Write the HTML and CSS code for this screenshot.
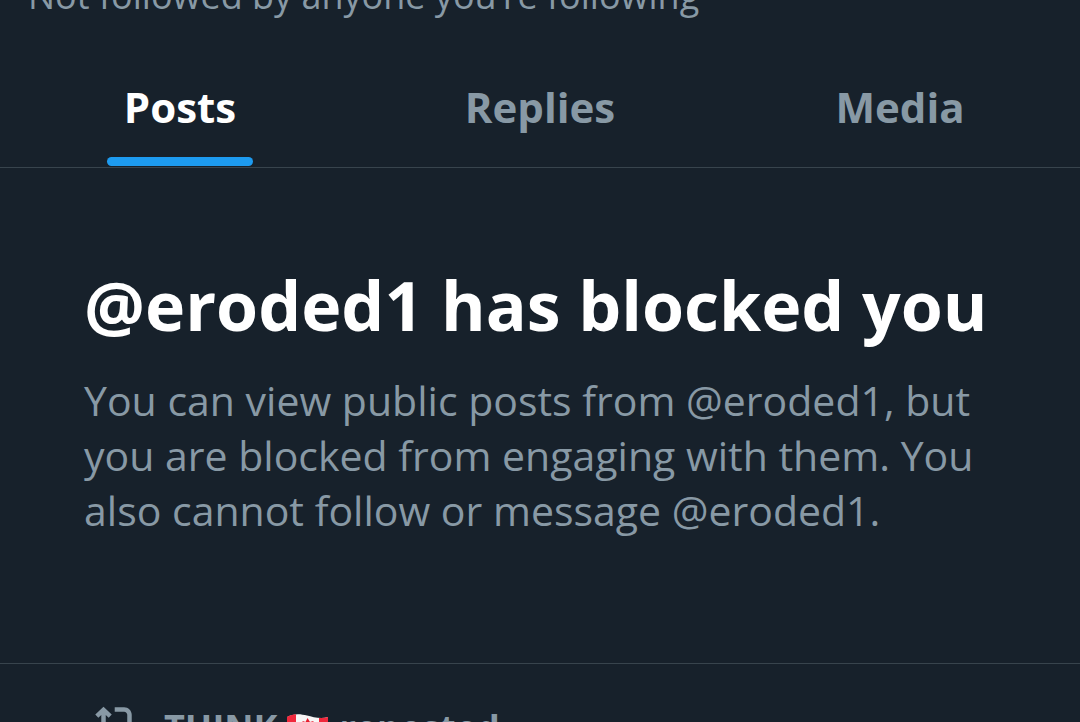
FILE: index.html
```html
<!DOCTYPE html>
<html lang="en">
<head>
<meta charset="utf-8">
<meta name="viewport" content="width=device-width, initial-scale=1">
<title>@eroded1</title>
<link rel="stylesheet" href="styles.css">
</head>
<body class="page">
  <p class="followers-note">Not followed by anyone you’re following</p>
  <nav class="tabs">
    <a class="tab tab-active" href="#posts" aria-current="page"><span class="tab-label">Posts</span></a>
    <a class="tab" href="#replies"><span class="tab-label">Replies</span></a>
    <a class="tab" href="#media"><span class="tab-label">Media</span></a>
  </nav>
  <main>
    <section class="blocked">
      <h1 class="blocked-title">@eroded1 has blocked you</h1>
      <p class="blocked-text">You can view public posts from @eroded1, but you are blocked from engaging with them. You also cannot follow or message @eroded1.</p>
    </section>
    <article class="post">
      <svg class="repost-icon" viewBox="0 0 24 24" aria-hidden="true"><path d="M4.75 3.79l4.603 4.3-1.706 1.82L6 8.38v7.37c0 .97.784 1.75 1.75 1.75H13V20H7.75c-2.347 0-4.25-1.9-4.25-4.25V8.38L1.853 9.91.147 8.09l4.603-4.3zm11.5 2.71H11V4h5.25c2.347 0 4.25 1.9 4.25 4.25v7.37l1.647-1.53 1.706 1.82-4.603 4.3-4.603-4.3 1.706-1.82L18 15.62V8.25c0-.97-.784-1.75-1.75-1.75z"/></svg>
      <a class="reposter" href="#think">
        <span>THINK</span>
        <svg class="flag" viewBox="0 0 42 32" role="img" aria-label="Flag of Canada">
          <path fill="#f7f5f5" d="M0 3C7-1 14 0 20 1.500s14 4 21 1.500v25c-7 3-15 1-21-.5S7 25 0 29z"/>
          <path fill="#f0283c" d="M0 3C3 1.300 6 .5 9 .3v25.500c-3 .4-6 1.500-9 3.200zM32 4c3 .3 6 0 9-1v25c-3 1.300-6 1.500-9 1.200z"/>
          <path fill="#e81c2e" d="M20.500 4l2.500 4 3.500-1-1 6 4-3 1 3 2 1-6 6 1 2-5.500-1v4h-2v-4l-5.500 1 1-2-6-6 2-1 1-3 4 3-1-6 3 1z"/>
        </svg>
        <span>reposted</span>
      </a>
    </article>
  </main>
</body>
</html>
```
FILE: styles.css
```css
* {
  box-sizing: border-box;
}

.page {
  height: 100vh;
  margin: 0;
  overflow: hidden;
  background: #17212b;
  color: #8899a5;
  font-family: "Open Sans", "Noto Sans", sans-serif;
}

.followers-note {
  margin: -32px 28px 0;
  font-size: 36px;
  line-height: 56px;
}

.tabs {
  display: grid;
  grid-template-columns: repeat(3, 1fr);
  margin-top: 24px;
  border-bottom: 1px solid #38444d;
}

.tab {
  display: flex;
  justify-content: center;
  color: inherit;
  font-size: 42px;
  font-weight: 700;
  line-height: 56px;
  text-decoration: none;
}

.tab-label {
  position: relative;
  padding: 31px 17px 32px;
}

.tab-active {
  color: #fff;
}

.tab-active .tab-label::after {
  content: "";
  position: absolute;
  right: 0;
  bottom: 1px;
  left: 0;
  height: 9px;
  border-radius: 5px;
  background: #1d9bf0;
}

.blocked {
  padding: 92px 84px 125px;
  border-bottom: 1px solid #38444d;
}

.blocked-title {
  margin: 0 0 23px;
  color: #fff;
  font-size: 68px;
  font-weight: 700;
  line-height: 90px;
  white-space: nowrap;
}

.blocked-text {
  margin: 0;
  font-size: 41px;
  line-height: 55px;
}

.post {
  display: flex;
  align-items: flex-start;
  gap: 26px;
  padding: 36px 95px;
}

.repost-icon {
  width: 43px;
  height: 43px;
  fill: currentColor;
}

.reposter {
  display: flex;
  gap: 10px;
  color: inherit;
  font-size: 36px;
  font-weight: 700;
  line-height: 56px;
  text-decoration: none;
}

.flag {
  width: 42px;
  height: 32px;
  margin-top: 14px;
}
```
